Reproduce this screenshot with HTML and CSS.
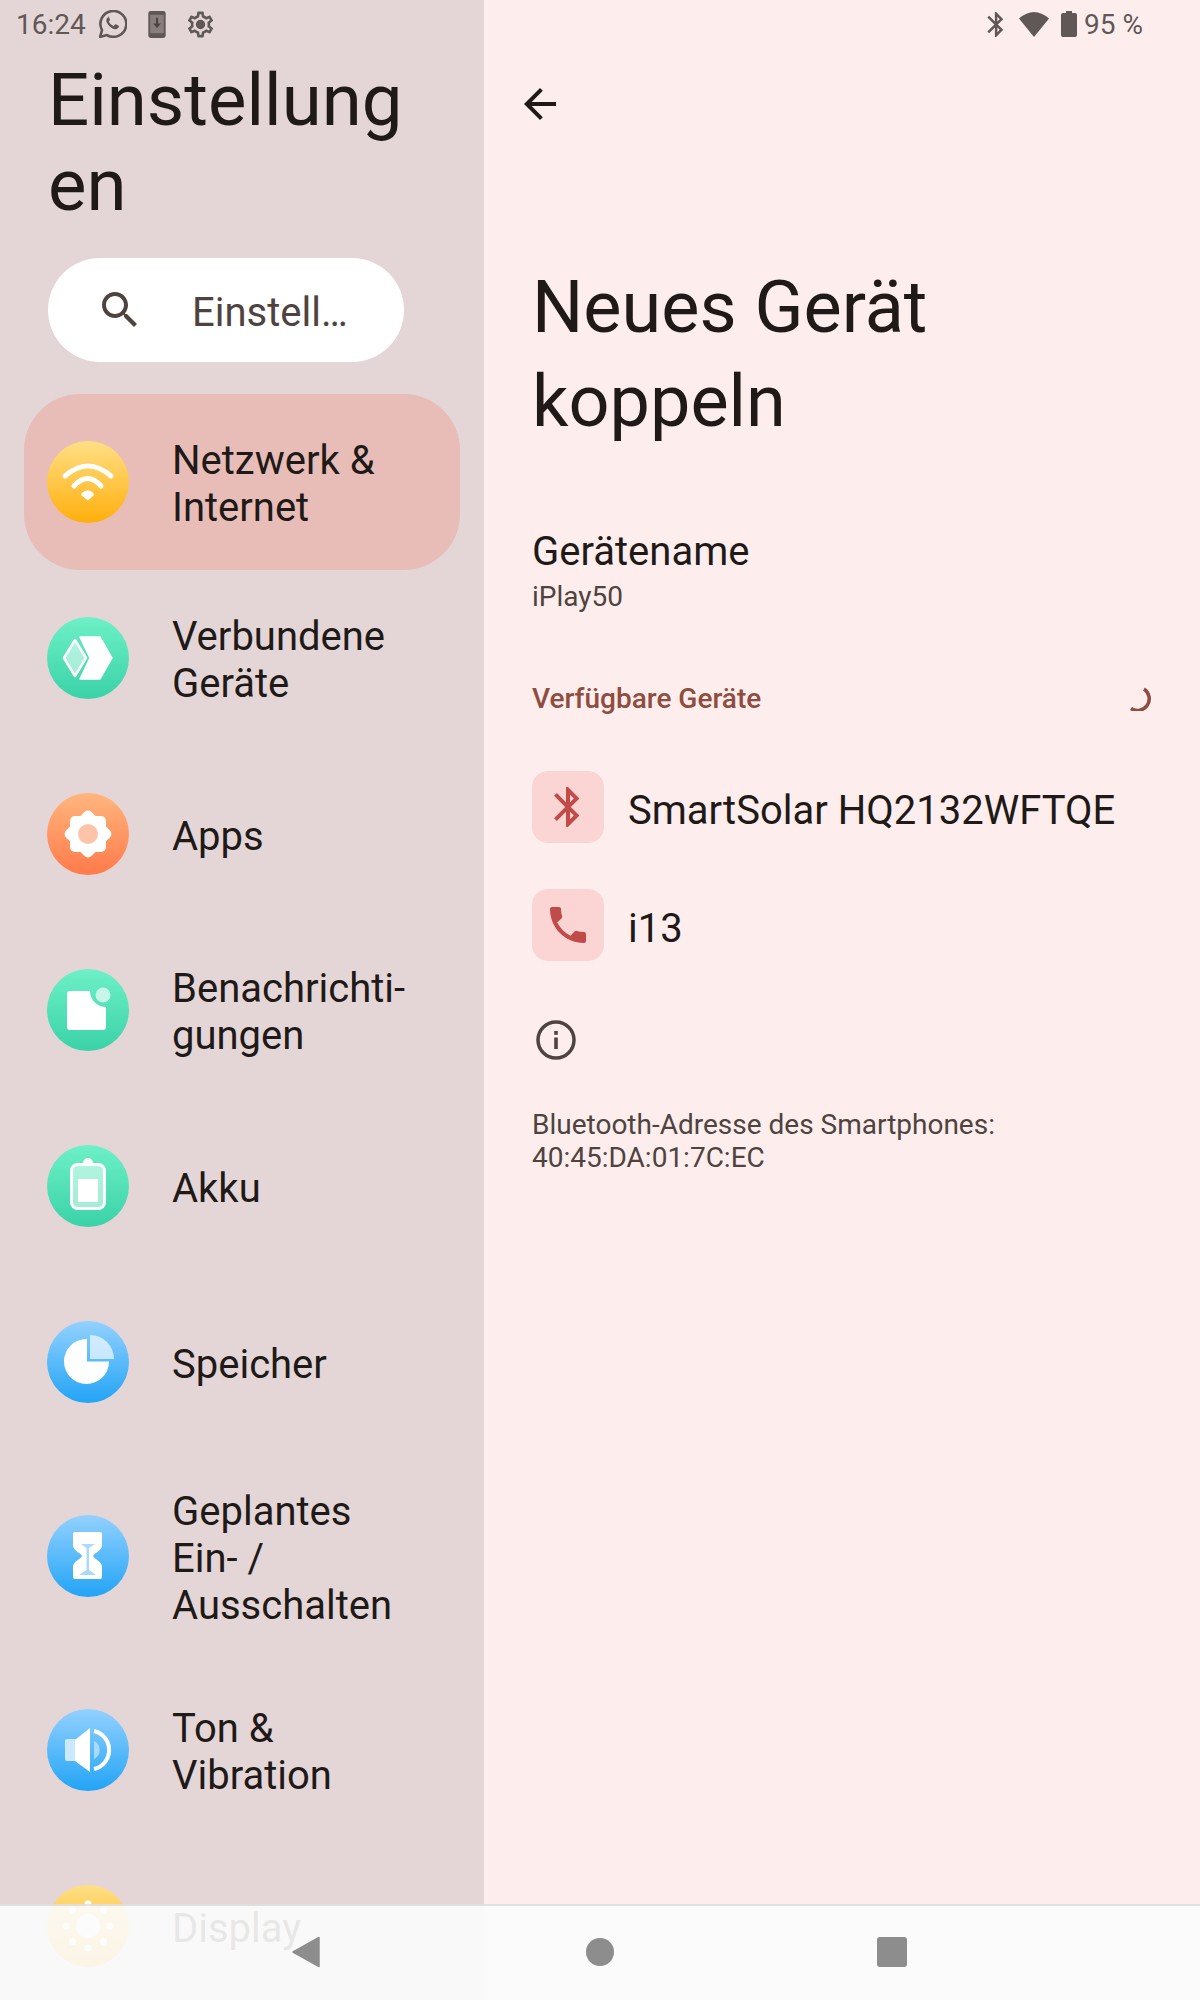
FILE: index.html
```html
<!doctype html>
<html lang="de">
<head>
    <meta charset="UTF-8">
    <link rel="stylesheet" href="styles.css">
    <title>Einstellungen</title>
</head>
<body>
<div class="screen">
    <div class="sidebar">
        <div class="status-bar">
            <span class="time">16:24</span>
            <svg class="st-whatsapp" viewBox="1 1 26 26"><path d="M2 26l1.800-6.400A12 12 0 1 1 8.400 24.300z" fill="none" stroke="#5f5856" stroke-width="2.400" stroke-linejoin="round"/><path d="M10.200 7.600c-.5 0-1.300.3-1.800 1-1 1.400-.8 3.300.6 5.400 1.800 2.700 4.400 4.500 6.800 4.800 1.500.2 3-.6 3.500-1.700.2-.5.3-1.200.1-1.500l-2.800-1.400c-.3-.1-.6 0-.8.3l-.9 1.100c-.2.2-.4.2-.7.1-1.700-.7-3-1.900-3.900-3.500-.1-.3-.1-.5.1-.7l.7-.9c.2-.2.2-.5.1-.8l-1.200-2.800c-.1-.3-.4-.4-.8-.4z" fill="#5f5856"/></svg>
            <svg class="st-download" viewBox="0 0 18 28"><rect width="18" height="28" rx="2.500" fill="#5f5856"/><rect x="2" y="4" width="14" height="19" fill="#e4d6d6" opacity=".3"/><path d="M8 7h2v6h3l-4 4.500L5 13h3z" fill="#4a4240"/></svg>
            <svg class="st-gear" viewBox="0 0 24 24"><path fill="#5f5856" d="M19.43 12.98c.04-.32.07-.64.07-.98 0-.34-.03-.66-.07-.98l2.11-1.65c.19-.15.24-.42.12-.64l-2-3.46c-.09-.16-.26-.25-.44-.25-.06 0-.12.01-.17.03l-2.49 1c-.52-.4-1.08-.73-1.69-.98l-.38-2.65C14.46 2.18 14.25 2 14 2h-4c-.25 0-.46.18-.49.42l-.38 2.65c-.61.25-1.17.59-1.69.98l-2.49-1c-.06-.02-.12-.03-.18-.03-.17 0-.34.09-.43.25l-2 3.46c-.13.22-.07.49.12.64l2.11 1.65c-.04.32-.07.65-.07.98 0 .33.03.66.07.98l-2.11 1.65c-.19.15-.24.42-.12.64l2 3.46c.09.16.26.25.44.25.06 0 .12-.01.17-.03l2.49-1c.52.4 1.08.73 1.69.98l.38 2.65c.03.24.24.42.49.42h4c.25 0 .46-.18.49-.42l.38-2.65c.61-.25 1.17-.59 1.69-.98l2.49 1c.06.02.12.03.18.03.17 0 .34-.09.43-.25l2-3.46c.12-.22.07-.49-.12-.64l-2.11-1.65zm-1.98-1.71c.04.31.05.52.05.73 0 .21-.02.43-.05.73l-.14 1.13.89.7 1.08.84-.7 1.21-1.27-.51-1.04-.42-.9.68c-.43.32-.84.56-1.25.73l-1.06.43-.16 1.13-.2 1.35h-1.4l-.19-1.35-.16-1.13-1.06-.43c-.43-.18-.83-.41-1.23-.71l-.91-.7-1.06.43-1.27.51-.7-1.21 1.08-.84.89-.7-.14-1.13c-.03-.31-.05-.54-.05-.74s.02-.43.05-.73l.14-1.13-.89-.7-1.08-.84.7-1.21 1.27.51 1.04.42.9-.68c.43-.32.84-.56 1.25-.73l1.06-.43.16-1.13.2-1.35h1.39l.19 1.35.16 1.13 1.06.43c.43.18.83.41 1.23.71l.91.7 1.06-.43 1.27-.51.7 1.21-1.07.85-.89.7.14 1.13z"/><circle cx="12" cy="12" r="3.600" fill="#5f5856"/></svg>
        </div>
        <h1 class="side-title">Einstellung<br>en</h1>
        <div class="search">
            <svg class="search-icon" viewBox="0 0 24 24"><path fill="#4f4340" d="M15.5 14h-.79l-.28-.27C15.41 12.59 16 11.11 16 9.500 16 5.910 13.090 3 9.500 3S3 5.910 3 9.500 5.910 16 9.500 16c1.610 0 3.090-.59 4.230-1.570l.27.28v.79l5 4.990L20.490 19l-4.990-5zm-6 0C7.010 14 5 11.990 5 9.500S7.010 5 9.500 5 14 7.010 14 9.500 11.990 14 9.500 14z"/></svg>
            <span class="search-text">Einstell…</span>
        </div>
        <div class="menu">
            <div class="menu-item selected">
                <div class="circle yellow">
                    <svg viewBox="0 0 82 82"><path d="M18 35Q41 15 64 35" fill="none" stroke="#fff" stroke-width="5" stroke-linecap="round"/><path d="M27 45Q41 30 54 45" fill="none" stroke="#fff" stroke-width="5" stroke-linecap="round"/><path d="M34 53.500Q41 46 47 53.500L41 59z" fill="#fff" stroke="#fff" stroke-width="1" stroke-linejoin="round"/></svg>
                </div>
                <div class="menu-label">Netzwerk &amp;<br>Internet</div>
            </div>
            <div class="menu-item">
                <div class="circle green">
                    <svg viewBox="0 0 82 82"><path d="M33 20h20l12 21-12 21H33l10-21z" fill="#fff" stroke="#fff" stroke-width="1.500" stroke-linejoin="round"/><path d="M28 23l11 18-11 18-11-18z" fill="#fff" fill-opacity=".5" stroke="#fff" stroke-width="2.500" stroke-linejoin="round"/></svg>
                </div>
                <div class="menu-label">Verbundene<br>Geräte</div>
            </div>
            <div class="menu-item">
                <div class="circle orange">
                    <svg viewBox="0 0 82 82"><rect x="23" y="23" width="36" height="36" rx="5" fill="#fff"/><rect x="23" y="23" width="36" height="36" rx="5" fill="#fff" transform="rotate(45 41 41)"/><circle cx="41" cy="41" r="10" fill="#fdc4a9"/></svg>
                </div>
                <div class="menu-label">Apps</div>
            </div>
            <div class="menu-item">
                <div class="circle green">
                    <svg viewBox="0 0 82 82"><path d="M23 22H43A16 16 0 0 0 59 38V58a3 3 0 0 1-3 3H23a3 3 0 0 1-3-3V25a3 3 0 0 1 3-3z" fill="#fff"/><circle cx="56" cy="26" r="7.500" fill="#fff" fill-opacity=".65"/></svg>
                </div>
                <div class="menu-label">Benachrichti-<br>gungen</div>
            </div>
            <div class="menu-item">
                <div class="circle green">
                    <svg viewBox="0 0 82 82"><path d="M36 18a5 5 0 0 1 10 0z" fill="#fff"/><rect x="24.500" y="19.500" width="33" height="44" rx="6" fill="#fff" fill-opacity=".5" stroke="#fff" stroke-width="3"/><rect x="31" y="34" width="20" height="23" fill="#fff"/></svg>
                </div>
                <div class="menu-label">Akku</div>
            </div>
            <div class="menu-item">
                <div class="circle blue">
                    <svg viewBox="0 0 82 82"><path d="M40 18A22.500 22.500 0 1 0 62 40.500H40z" fill="#fff"/><path d="M43 14A24 24 0 0 1 67 38H43z" fill="#fff" fill-opacity=".65"/></svg>
                </div>
                <div class="menu-label">Speicher</div>
            </div>
            <div class="menu-item tall">
                <div class="circle blue">
                    <svg viewBox="0 0 82 82"><path d="M28 17H53a2 2 0 0 1 2 2V30C55 36 47 38 46 41 47 44 55 46 55 52V62a2 2 0 0 1-2 2H28a2 2 0 0 1-2-2V52C26 46 34 44 35 41 34 38 26 36 26 30V19a2 2 0 0 1 2-2z" fill="#fff"/><path d="M34 29H48L42 33V55L49 60H32L39.500 55V33z" fill="#a9dafb"/></svg>
                </div>
                <div class="menu-label">Geplantes<br>Ein- /<br>Ausschalten</div>
            </div>
            <div class="menu-item">
                <div class="circle blue">
                    <svg viewBox="0 0 82 82"><rect x="18" y="30" width="12" height="22" rx="2" fill="#cbe9fd"/><path d="M28 31L43 19V63L28 52z" fill="#fff"/><path d="M47 32A10 10 0 0 1 47 50z" fill="#a9dafb"/><path d="M47 22A19.500 19.500 0 0 1 47 60" fill="none" stroke="#fff" stroke-width="4"/></svg>
                </div>
                <div class="menu-label">Ton &amp;<br>Vibration</div>
            </div>
            <div class="menu-item">
                <div class="circle yellow">
                    <svg viewBox="0 0 82 82"><circle cx="41" cy="41" r="12" fill="#fff"/><g fill="#fff"><circle cx="41" cy="19" r="3.500"/><circle cx="41" cy="63" r="3.500"/><circle cx="19" cy="41" r="3.500"/><circle cx="63" cy="41" r="3.500"/><circle cx="25.500" cy="25.500" r="3.500"/><circle cx="56.500" cy="25.500" r="3.500"/><circle cx="25.500" cy="56.500" r="3.500"/><circle cx="56.500" cy="56.500" r="3.500"/></g></svg>
                </div>
                <div class="menu-label">Display</div>
            </div>
        </div>
    </div>

    <div class="detail">
        <div class="status-bar status-right">
            <svg class="st-bt" viewBox="5 2 13 20"><path fill="#5f5856" d="M17.71 7.71L12 2h-1v7.59L6.41 5 5 6.41 10.59 12 5 17.59 6.41 19 11 14.41V22h1l5.71-5.71-4.3-4.29 4.3-4.29zM13 5.830l1.880 1.880L13 9.590V5.830zm1.880 10.460L13 18.170v-3.760l1.880 1.880z"/></svg>
            <svg class="st-wifi" viewBox="0 0 30 25"><path d="M0 6.500Q15-6.500 30 6.500L15 25z" fill="#5f5856"/></svg>
            <svg class="st-battery" viewBox="0 0 16 26"><path d="M5 0h6v2h3a2 2 0 0 1 2 2v20a2 2 0 0 1-2 2H2a2 2 0 0 1-2-2V4a2 2 0 0 1 2-2h3z" fill="#5f5856"/></svg>
            <span class="percent">95 %</span>
        </div>
        <div class="back">
            <svg viewBox="0 0 24 24"><path fill="#1f1a18" d="M20 11H7.830l5.590-5.590L12 4l-8 8 8 8 1.410-1.410L7.830 13H20v-2z"/></svg>
        </div>
        <h1 class="page-title">Neues Gerät<br>koppeln</h1>
        <div class="name-block">
            <div class="name-label">Gerätename</div>
            <div class="name-value">iPlay50</div>
        </div>
        <div class="section-head">
            <span>Verfügbare Geräte</span>
            <svg class="spinner" viewBox="0 0 24 24"><path d="M16 2A11 11 0 0 1 3 21.500" fill="none" stroke="#8f4c3f" stroke-width="3.500"/></svg>
        </div>
        <div class="device">
            <div class="device-icon">
                <svg viewBox="0 0 24 24"><path fill="#c04c4a" d="M17.71 7.71L12 2h-1v7.59L6.41 5 5 6.41 10.59 12 5 17.59 6.41 19 11 14.41V22h1l5.71-5.71-4.3-4.29 4.3-4.29zM13 5.830l1.880 1.880L13 9.590V5.830zm1.880 10.460L13 18.170v-3.760l1.880 1.880z"/></svg>
            </div>
            <span class="device-name">SmartSolar HQ2132WFTQE</span>
        </div>
        <div class="device">
            <div class="device-icon">
                <svg viewBox="0 0 24 24"><path fill="#c04c4a" d="M6.620 10.790c1.440 2.830 3.760 5.140 6.590 6.590l2.200-2.200c.27-.27.67-.36 1.020-.24 1.120.37 2.330.57 3.570.57.55 0 1 .45 1 1V20c0 .55-.45 1-1 1-9.390 0-17-7.610-17-17 0-.55.45-1 1-1h3.500c.55 0 1 .45 1 1 0 1.250.2 2.450.57 3.570.11.35.03.74-.25 1.020l-2.200 2.200z"/></svg>
            </div>
            <span class="device-name">i13</span>
        </div>
        <div class="info-icon">
            <svg viewBox="0 0 40 40"><circle cx="20" cy="20" r="18" fill="none" stroke="#4f4340" stroke-width="3.500"/><rect x="18.200" y="17.500" width="3.600" height="11.500" fill="#4f4340"/><rect x="18.200" y="11" width="3.600" height="3.800" fill="#4f4340"/></svg>
        </div>
        <div class="address">Bluetooth-Adresse des Smartphones:<br>40:45:DA:01:7C:EC</div>
    </div>

    <div class="nav-bar">
        <svg class="nav-back" viewBox="0 0 28 32"><path d="M27 1.500V30.500L1 16z" fill="#8d8d8d" stroke="#8d8d8d" stroke-width="1.500" stroke-linejoin="round"/></svg>
        <div class="nav-home"></div>
        <div class="nav-recent"></div>
    </div>
</div>
</body>
</html>
```

FILE: styles.css
```css
html, body {
    margin: 0;
    padding: 0;
}

body {
    font-family: Roboto, "Liberation Sans", sans-serif;
    color: #1f1a18;
}

.screen {
    position: relative;
    display: flex;
    width: 1200px;
    height: 2000px;
    overflow: hidden;
}

.status-bar {
    display: flex;
    align-items: center;
    height: 48px;
    color: #5f5856;
    font-size: 28px;
}

.sidebar {
    width: 484px;
    flex-shrink: 0;
    background-color: #e4d6d6;
}

.sidebar .status-bar {
    padding-left: 16px;
}

.st-whatsapp {
    width: 28px;
    height: 28px;
    margin-left: 13px;
}

.st-download {
    width: 18px;
    height: 27px;
    margin-left: 21px;
}

.st-gear {
    width: 31px;
    height: 31px;
    margin-left: 19px;
}

.side-title {
    margin: 10px 0 30px 48px;
    font-size: 72.5px;
    font-weight: 400;
    line-height: 85px;
}

.search {
    display: flex;
    align-items: center;
    width: 356px;
    height: 104px;
    margin-left: 48px;
    border-radius: 52px;
    background-color: #fff;
    color: #4f4340;
}

.search-icon {
    width: 48px;
    height: 48px;
    margin-left: 48px;
}

.search-text {
    margin-left: 48px;
    padding-top: 5px;
    font-size: 40px;
}

.menu {
    margin-top: 32px;
}

.menu-item {
    display: flex;
    align-items: center;
    height: 176px;
    margin: 0 24px;
    padding-left: 23px;
}

.menu-item.tall {
    height: 212px;
}

.menu-item.selected {
    border-radius: 56px;
    background-color: #e8bdb7;
}

.circle {
    width: 82px;
    height: 82px;
    flex-shrink: 0;
    border-radius: 50%;
}

.circle svg {
    display: block;
    width: 82px;
    height: 82px;
}

.yellow {
    background: linear-gradient(#ffdf85, #ffaf0d);
}

.green {
    background: linear-gradient(#6ef0c6, #3ad2a8);
}

.orange {
    background: linear-gradient(#ffb67e, #ff7a4a);
}

.blue {
    background: linear-gradient(#93d1ff, #22a4f5);
}

.menu-label {
    margin-left: 43px;
    padding-top: 4px;
    font-size: 40px;
    line-height: 47px;
    white-space: nowrap;
}

.detail {
    flex: 1;
    padding-left: 48px;
    background-color: #fdeeed;
}

.status-right {
    justify-content: flex-end;
    padding-right: 57px;
}

.st-bt {
    width: 17px;
    height: 25px;
}

.st-wifi {
    width: 30px;
    height: 25px;
    margin-left: 15px;
}

.st-battery {
    width: 16px;
    height: 26px;
    margin-left: 12px;
}

.percent {
    margin-left: 7px;
}

.back {
    width: 48px;
    height: 48px;
    margin: 32px 0 0 -16px;
}

.back svg {
    display: block;
    width: 48px;
    height: 48px;
}

.page-title {
    margin: 133px 0 0;
    font-size: 72px;
    font-weight: 400;
    line-height: 94px;
}

.name-block {
    margin-top: 79px;
}

.name-label {
    font-size: 40px;
    line-height: 47px;
}

.name-value {
    margin-top: 5px;
    color: #4f4340;
    font-size: 28px;
    line-height: 33px;
}

.section-head {
    display: flex;
    align-items: center;
    justify-content: space-between;
    height: 33px;
    margin-top: 69px;
    padding-right: 48px;
    color: #8f4c3f;
    font-size: 28px;
    font-weight: 500;
}

.spinner {
    width: 24px;
    height: 24px;
}

.device {
    display: flex;
    align-items: center;
    gap: 24px;
    height: 72px;
    margin-top: 46px;
    font-size: 40px;
}

.section-head + .device {
    margin-top: 56px;
}

.device-name {
    padding-top: 6px;
}

.device-icon {
    display: flex;
    align-items: center;
    justify-content: center;
    width: 72px;
    height: 72px;
    border-radius: 16px;
    background-color: #fbd5d3;
}

.device-icon svg {
    width: 48px;
    height: 48px;
}

.info-icon {
    width: 40px;
    height: 40px;
    margin: 59px 0 0 4px;
}

.info-icon svg {
    display: block;
    width: 40px;
    height: 40px;
}

.address {
    margin-top: 48px;
    color: #4f4340;
    font-size: 28px;
    line-height: 33px;
}

.nav-bar {
    position: absolute;
    left: 0;
    right: 0;
    bottom: 0;
    height: 94px;
    border-top: 2px solid rgba(0, 0, 0, .1);
    background-color: rgba(252, 252, 252, .91);
}

.nav-back {
    position: absolute;
    left: 292px;
    top: 30px;
    width: 28px;
    height: 32px;
}

.nav-home {
    position: absolute;
    left: 586px;
    top: 32px;
    width: 28px;
    height: 28px;
    border-radius: 50%;
    background-color: #8d8d8d;
}

.nav-recent {
    position: absolute;
    left: 877px;
    top: 31px;
    width: 30px;
    height: 30px;
    border-radius: 3px;
    background-color: #8d8d8d;
}
```
